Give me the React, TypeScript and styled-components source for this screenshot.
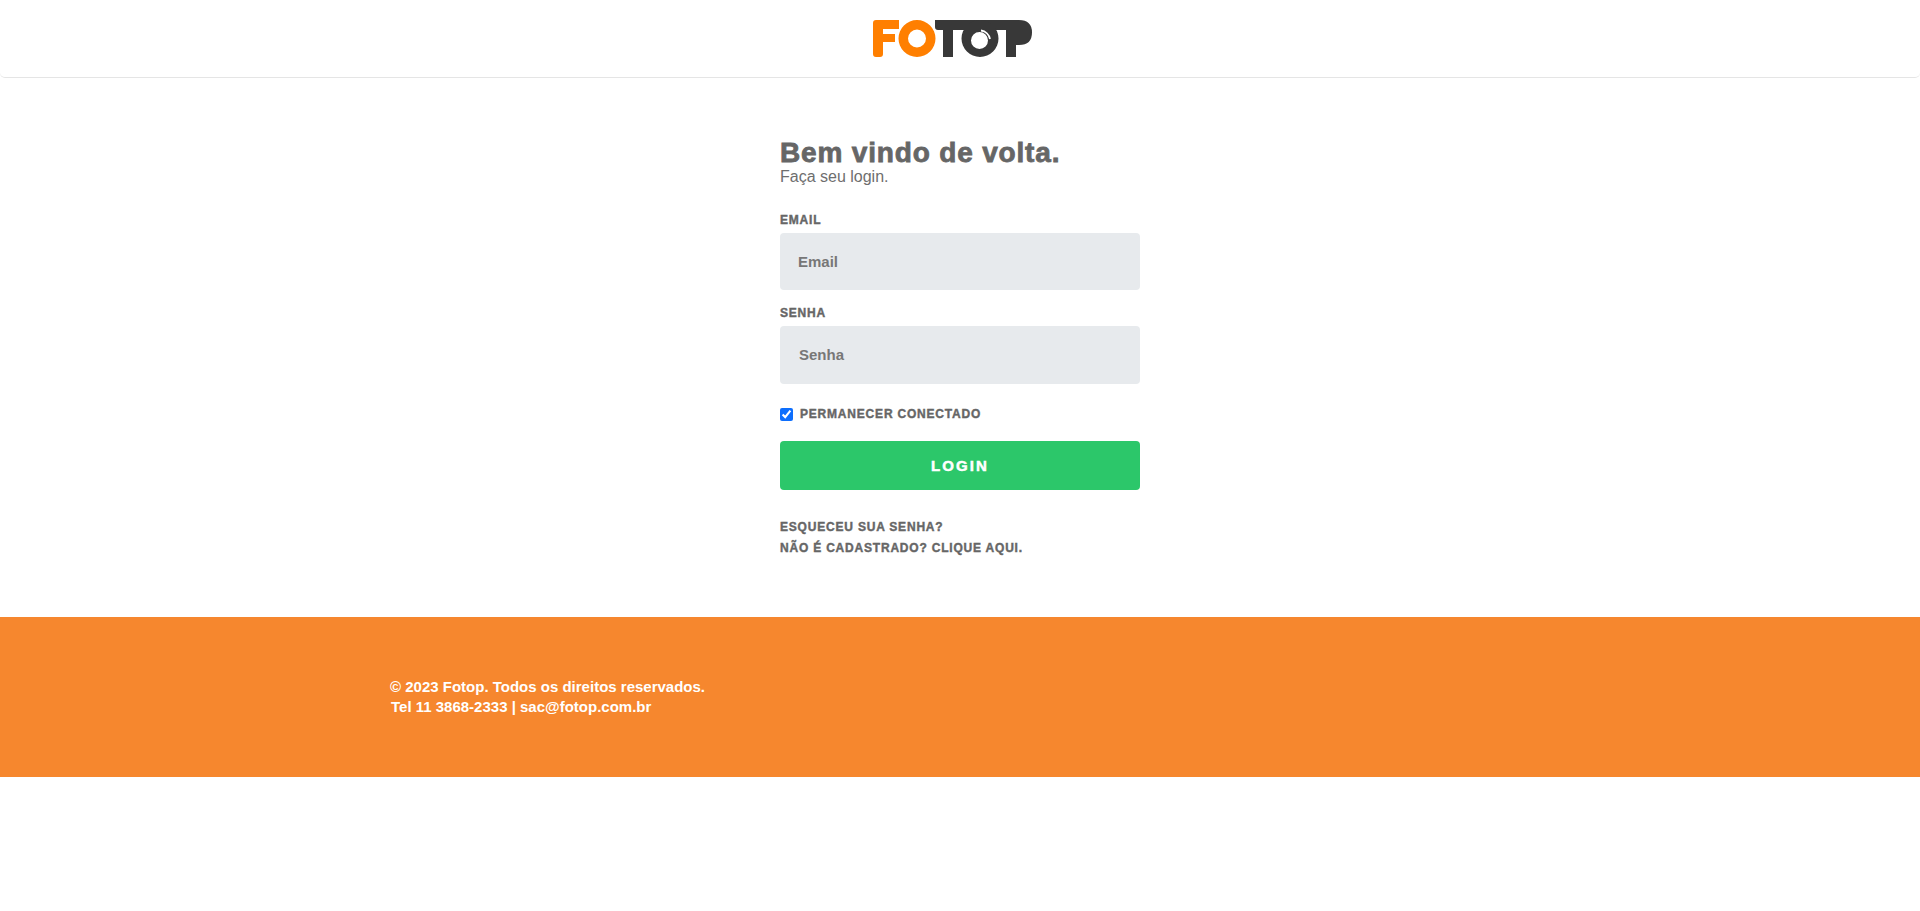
import * as React from 'react'
import styled, { createGlobalStyle } from 'styled-components'

const GlobalStyle = createGlobalStyle`
  html, body { margin: 0; padding: 0; background: #fff; }
  * { box-sizing: border-box; }
  body { font-family: "Liberation Sans", Arial, sans-serif; color: #666; }
`

const SPage = styled.div`
  min-height: 911px;
  display: flex;
  flex-direction: column;
`

const SHeader = styled.header`
  height: 78px;
  display: flex;
  align-items: flex-start;
  justify-content: center;
  padding-top: 20px;
  padding-right: 14px;
  border-bottom: 1px solid #e5e5e5;
  border-radius: 0 0 5px 5px;
`

const SMain = styled.main`
  height: 539px;
  padding: 59px 0 0 780px;
`

const SForm = styled.form`
  width: 360px;
  display: flex;
  flex-direction: column;
`

const STitle = styled.h1`
  margin: 0;
  font-size: 28px;
  line-height: 31px;
  font-weight: 700;
  letter-spacing: 0.83px;
  -webkit-text-stroke: 0.8px #666;
  color: #666;
`

const SSubtitle = styled.p`
  margin: 0 0 25px;
  font-size: 16px;
  line-height: 18px;
  color: #6e6e6e;
`

const SLabel = styled.label`
  display: block;
  height: 18px;
  margin-bottom: 4px;
  font-size: 12px;
  line-height: 18px;
  font-weight: 700;
  letter-spacing: 0.8px;
  -webkit-text-stroke: 0.4px #666;
  color: #666;
`

const SInput = styled.input<{ $tall?: boolean; $inset: number }>`
  display: block;
  width: 100%;
  height: ${({ $tall }) => ($tall ? 58 : 57)}px;
  margin-bottom: 14px;
  padding: 0 0 ${({ $tall }) => ($tall ? 2 : 0)}px ${({ $inset }) => $inset}px;
  border: 0;
  border-radius: 4px;
  outline: none;
  background: #e7eaed;
  font-family: "Liberation Sans", Arial, sans-serif;
  font-size: 15px;
  font-weight: 700;
  color: #666;
  &::placeholder { color: #777; opacity: 1; }
`

const SRemember = styled.label`
  display: flex;
  align-items: center;
  height: 18px;
  margin: 7px 0 18px;
  font-size: 12px;
  font-weight: 700;
  letter-spacing: 0.8px;
  -webkit-text-stroke: 0.4px #666;
  color: #666;
`

const SCheckbox = styled.input`
  width: 13px;
  height: 13px;
  margin: 0 7px 0 0;
  accent-color: #0d6efd;
`

const SButton = styled.button`
  width: 100%;
  height: 49px;
  border: 0;
  border-radius: 4px;
  background: #2cc76a;
  color: #fff;
  font-family: "Liberation Sans", Arial, sans-serif;
  font-size: 15px;
  font-weight: 700;
  letter-spacing: 2.1px;
  -webkit-text-stroke: 0.5px #fff;
`

const SLinks = styled.div`
  display: flex;
  flex-direction: column;
  margin-top: 27px;
`

const SLink = styled.a`
  display: block;
  height: 21px;
  font-size: 12px;
  line-height: 20px;
  font-weight: 700;
  letter-spacing: 0.8px;
  -webkit-text-stroke: 0.4px #666;
  color: #666;
  text-decoration: none;
`

const SFooter = styled.footer`
  height: 160px;
  padding: 60px 0 0 390px;
  background: #f6872e;
  color: #fff;
  font-size: 15px;
  line-height: 20px;
  font-weight: 700;
`

const SFooterLine = styled.div<{ $inset?: number }>`
  padding-left: ${({ $inset }) => $inset || 0}px;
`

const Logo = () => (
  <svg width="160" height="37" viewBox="0 0 160 37">
    <path
      fill="#ff7f00"
      d="M3 0H26V9H10V14H22V22H10V34Q10 37 7 37H3Q0 37 0 34V3Q0 0 3 0Z"
    />
    <path
      fill="#ff7f00"
      fillRule="evenodd"
      d="M44 0A18.5 18.5 0 1 1 44 37A18.5 18.5 0 1 1 44 0ZM44 9.5A9 9 0 1 0 44 27.5A9 9 0 1 0 44 9.5Z"
    />
    <path
      fill="#383838"
      d="M62 0H146Q159 0 159 12.5Q159 25 146 25H143V37H133V10H80V37H70V10H65Q62 10 62 7Z"
    />
    <path
      fill="#383838"
      fillRule="evenodd"
      d="M107 0A18.5 18.5 0 1 1 107 37A18.5 18.5 0 1 1 107 0ZM106.5 12A8.5 8.5 0 1 0 106.5 29A8.5 8.5 0 1 0 106.5 12Z"
    />
    <path fill="none" stroke="#fff" strokeWidth="1.8" d="M108 10.5A10.5 10.5 0 0 1 117 19" />
  </svg>
)

const App = () => (
  <SPage>
    <GlobalStyle />
    <SHeader>
      <Logo />
    </SHeader>
    <SMain>
      <SForm onSubmit={(e) => e.preventDefault()}>
        <STitle>Bem vindo de volta.</STitle>
        <SSubtitle>Faça seu login.</SSubtitle>
        <SLabel htmlFor="email">EMAIL</SLabel>
        <SInput id="email" placeholder="Email" $inset={18} />
        <SLabel htmlFor="senha">SENHA</SLabel>
        <SInput id="senha" placeholder="Senha" $tall $inset={19} />
        <SRemember>
          <SCheckbox type="checkbox" defaultChecked />
          PERMANECER CONECTADO
        </SRemember>
        <SButton type="submit">LOGIN</SButton>
        <SLinks>
          <SLink href="#">ESQUECEU SUA SENHA?</SLink>
          <SLink href="#">NÃO É CADASTRADO? CLIQUE AQUI.</SLink>
        </SLinks>
      </SForm>
    </SMain>
    <SFooter>
      <SFooterLine>© 2023 Fotop. Todos os direitos reservados.</SFooterLine>
      <SFooterLine $inset={1}>Tel 11 3868-2333 | sac@fotop.com.br</SFooterLine>
    </SFooter>
  </SPage>
)

export default App
